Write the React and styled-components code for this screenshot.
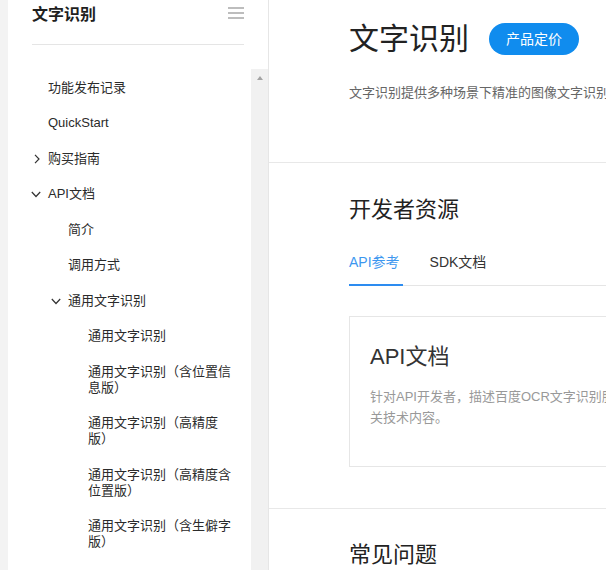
import React from "react";
import styled, { createGlobalStyle } from "styled-components";

const GlobalStyle = createGlobalStyle`
  html, body {
    margin: 0;
    padding: 0;
    background: #fff;
    overflow: hidden;
  }
  * { box-sizing: border-box; }
  body {
    font-family: "Liberation Sans", "Noto Sans CJK SC", sans-serif;
    color: #333;
    text-spacing-trim: space-all;
  }
`;

const Page = styled.div`
  display: flex;
  width: 100vw;
  height: 100vh;
  overflow: hidden;
`;

const Gutter = styled.div`
  flex: 0 0 8px;
  background: #f3f3f3;
`;

const Sidebar = styled.aside`
  flex: 0 0 261px;
  display: flex;
  flex-direction: column;
  border-right: 1px solid #e6e6e6;
  background: #fff;
  min-height: 0;
`;

const SideHeader = styled.div`
  margin: 0 24px;
  height: 45px;
  border-bottom: 1px solid #e5e5e5;
  display: flex;
  justify-content: space-between;
  align-items: flex-start;
`;

const SideTitle = styled.div`
  margin-top: 3px;
  font-size: 16px;
  line-height: 24px;
  font-weight: 700;
  color: #1f1f1f;
`;

const MenuIcon = styled.svg`
  margin-top: 7px;
  display: block;
`;

const NavArea = styled.div`
  margin-top: 24px;
  flex: 1;
  display: flex;
  min-height: 0;
  overflow: hidden;
`;

const NavList = styled.ul`
  list-style: none;
  margin: 0;
  padding: 1px 16px 0 0;
  flex: 1;
`;

const NavItem = styled.li`
  display: flex;
  align-items: flex-start;
  padding: 9.75px 0 9.75px ${(p) => 40 + p.$level * 20}px;
  font-size: 13px;
  line-height: 16px;
  color: #2b2b2b;
  text-spacing-trim: space-all;
`;

const Chevron = styled.svg`
  flex: 0 0 10px;
  margin: 3px 7px 0 -17px;
  display: block;
`;

const Scrollbar = styled.div`
  flex: 0 0 17px;
  background: #f1f1f1;
  display: flex;
  justify-content: center;
  padding-top: 7px;
`;

const ScrollArrow = styled.div`
  width: 0;
  height: 0;
  border-left: 3.5px solid transparent;
  border-right: 3.5px solid transparent;
  border-bottom: 4px solid #a3a3a3;
`;

const Main = styled.main`
  flex: 0 0 900px;
  min-width: 900px;
`;

const Section = styled.section`
  padding: ${(p) => p.$pad};
  border-bottom: ${(p) => (p.$last ? "none" : "1px solid #e8e8e8")};
`;

const TitleRow = styled.div`
  display: flex;
  align-items: center;
  gap: 20px;
  height: 40px;
`;

const PageTitle = styled.h1`
  margin: 0;
  font-size: 30px;
  line-height: 40px;
  font-weight: 400;
  color: #222;
`;

const PriceButton = styled.button`
  height: 32px;
  padding: 0 17px;
  border: none;
  border-radius: 16px;
  background: #108cee;
  color: #fff;
  font-family: inherit;
  font-size: 14px;
  line-height: 32px;
  cursor: pointer;
`;

const Desc = styled.p`
  margin: 24px 0 0;
  font-size: 13px;
  line-height: 20px;
  color: #666;
  white-space: nowrap;
`;

const SectionTitle = styled.h2`
  margin: 0;
  font-size: 22px;
  line-height: 30px;
  font-weight: 400;
  color: #222;
`;

const Tabs = styled.div`
  margin-top: 27px;
  display: flex;
  gap: 27px;
  border-bottom: 1px solid #e5e5e5;
`;

const Tab = styled.div`
  font-size: 14px;
  line-height: 20px;
  padding: 0 3px 12px 0;
  margin-bottom: -1px;
  border-bottom: 2px solid ${(p) => (p.$active ? "#2d8cf0" : "transparent")};
  color: ${(p) => (p.$active ? "#3d97ef" : "#333")};
`;

const Card = styled.div`
  margin-top: 30px;
  height: 151px;
  border: 1px solid #e6e6e6;
  padding: 25px 20px 0;
`;

const CardTitle = styled.h3`
  margin: 0;
  font-size: 22px;
  line-height: 30px;
  font-weight: 400;
  color: #333;
`;

const CardDesc = styled.p`
  margin: 14px 0 0;
  font-size: 13px;
  line-height: 21px;
  color: #999;
  white-space: nowrap;
`;

const ChevronRight = () => (
  <Chevron width="10" height="10" viewBox="0 0 10 10">
    <polyline points="4,0.8 8,5 4,9.2" fill="none" stroke="#333" strokeWidth="1.2" />
  </Chevron>
);

const ChevronDown = () => (
  <Chevron width="10" height="10" viewBox="0 0 10 10">
    <polyline points="0.8,3 5,7.5 9.2,3" fill="none" stroke="#333" strokeWidth="1.2" />
  </Chevron>
);

const nav = [
  { label: "功能发布记录", level: 0 },
  { label: "QuickStart", level: 0 },
  { label: "购买指南", level: 0, icon: "right" },
  { label: "API文档", level: 0, icon: "down" },
  { label: "简介", level: 1 },
  { label: "调用方式", level: 1 },
  { label: "通用文字识别", level: 1, icon: "down" },
  { label: "通用文字识别", level: 2 },
  { label: "通用文字识别（含位置信息版）", level: 2 },
  { label: "通用文字识别（高精度版）", level: 2 },
  { label: "通用文字识别（高精度含位置版）", level: 2 },
  { label: "通用文字识别（含生僻字版）", level: 2 },
];

export default function App() {
  return (
    <>
      <GlobalStyle />
      <Page>
        <Gutter />
        <Sidebar>
          <SideHeader>
            <SideTitle>文字识别</SideTitle>
            <MenuIcon width="16" height="12" viewBox="0 0 16 12">
              <line x1="0" y1="1" x2="16" y2="1" stroke="#9a9a9a" strokeWidth="1.3" />
              <line x1="0" y1="6" x2="16" y2="6" stroke="#9a9a9a" strokeWidth="1.3" />
              <line x1="0" y1="11" x2="16" y2="11" stroke="#9a9a9a" strokeWidth="1.3" />
            </MenuIcon>
          </SideHeader>
          <NavArea>
            <NavList>
              {nav.map((item, i) => (
                <NavItem key={i} $level={item.level}>
                  {item.icon === "right" && <ChevronRight />}
                  {item.icon === "down" && <ChevronDown />}
                  <span>{item.label}</span>
                </NavItem>
              ))}
            </NavList>
            <Scrollbar>
              <ScrollArrow />
            </Scrollbar>
          </NavArea>
        </Sidebar>
        <Main>
          <Section $pad="19px 80px 59px">
            <TitleRow>
              <PageTitle>文字识别</PageTitle>
              <PriceButton>产品定价</PriceButton>
            </TitleRow>
            <Desc>文字识别提供多种场景下精准的图像文字识别、检测服务，支持通用文字、卡证、票据等多种识别能力。</Desc>
          </Section>
          <Section $pad="32px 80px 41px">
            <SectionTitle>开发者资源</SectionTitle>
            <Tabs>
              <Tab $active>API参考</Tab>
              <Tab>SDK文档</Tab>
            </Tabs>
            <Card>
              <CardTitle>API文档</CardTitle>
              <CardDesc>
                针对API开发者，描述百度OCR文字识别服务的接口参数、调用方式、返回说明等相
                <br />
                关技术内容。
              </CardDesc>
            </Card>
          </Section>
          <Section $pad="31px 80px 40px" $last>
            <SectionTitle>常见问题</SectionTitle>
          </Section>
        </Main>
      </Page>
    </>
  );
}
